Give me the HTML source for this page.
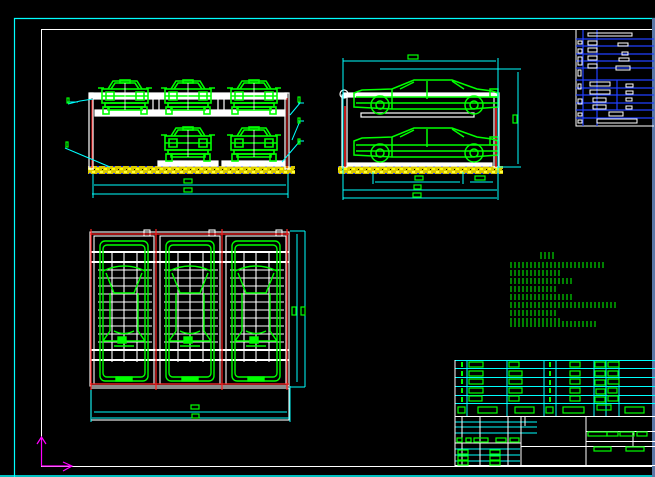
<!DOCTYPE html>
<html><head><meta charset="utf-8"><style>
html,body{margin:0;padding:0;background:#000;width:655px;height:477px;overflow:hidden}
svg{display:block}
text{font-family:"Liberation Sans",sans-serif}
</style></head><body>
<svg width="655" height="477" viewBox="0 0 655 477" xmlns="http://www.w3.org/2000/svg">
<defs>
<g id="fc" fill="none" stroke="#00ff00" stroke-width="1.6">
<path d="M8,9 L13,1 L37,1 L42,9"/><path d="M11,9 L15,3 L35,3 L39,9"/>
<rect x="20" y="0" width="10" height="3"/>
<rect x="2" y="9" width="46" height="14"/><path d="M-2,8 L4,8 M46,8 L52,8 M2,16 L48,16"/>
<path d="M6,12 L14,12 L14,20 L6,20Z M36,12 L44,12 L44,20 L36,20Z"/>
<rect x="5" y="23" width="40" height="4"/><rect x="8" y="27" width="34" height="3"/>
<rect x="3" y="27" width="6" height="7"/><rect x="41" y="27" width="6" height="7"/>
<path d="M25,3 L25,30" stroke="#fff" stroke-width="0.8"/>
</g>
<g id="sc" fill="none" stroke="#00ff00" stroke-width="1.5">
<path d="M2,14 L10,11 L40,10 L62,1 L100,1 L125,10 L140,12 L146,14 L146,28 L120,30 L40,30 L2,28 Z"/>
<path d="M48,10 L62,3 M75,2 L75,20 M100,2 L112,10 M4,18 L146,18 M4,24 L146,24 M40,10 L40,30"/>
<circle cx="28" cy="26" r="9"/><circle cx="28" cy="26" r="4"/>
<circle cx="122" cy="26" r="9"/><circle cx="122" cy="26" r="4"/>
<rect x="138" y="10" width="8" height="8"/>
</g>
<g id="pc" fill="none" stroke="#00ff00" stroke-width="1.4">
<rect x="0" y="0" width="48" height="140" rx="5"/>
<rect x="3" y="4" width="42" height="132" rx="4"/>
<path d="M3,30 Q24,20 45,30 M6,32 L14,52 L34,52 L42,32 M10,52 L10,90 M38,52 L38,90 M10,90 L3,100 M38,90 L45,100 M14,90 Q24,95 34,90 M3,100 L45,100 M14,105 L34,105"/>
<rect x="18" y="96" width="8" height="6" fill="#00ff00"/>
<rect x="16" y="136" width="16" height="4" fill="#00ff00"/>
</g>
<pattern id="fl" width="8" height="7" patternUnits="userSpaceOnUse">
<rect width="8" height="7" fill="#d8c800"/><rect x="0" y="0" width="3" height="2" fill="#ffff00"/><rect x="4" y="3" width="3" height="2" fill="#ffff40"/><rect x="1" y="5" width="2" height="1" fill="#2030ff"/><rect x="6" y="1" width="1" height="1" fill="#000"/>
</pattern>
</defs>

<path d="M14.5,477 L14.5,18.5 L655,18.5" fill="none" stroke="#00ffff" stroke-width="1.2"/>
<path d="M0,476 L655,476" stroke="#00ffff" stroke-width="1.5"/>
<rect x="41.5" y="29.5" width="620" height="437" fill="none" stroke="#fff" stroke-width="1"/>
<rect x="652" y="18" width="3" height="460" fill="#5a78a8"/>
<g stroke="#ff00ff" stroke-width="1.2" fill="none"><path d="M41.5,466 L41.5,437 M37,444 L41.5,437 L46,444 M41.5,466 L72,466 M63,462 L72,466 L63,471"/></g>

<!-- front elevation -->
<rect x="88" y="166" width="207" height="8" fill="url(#fl)"/>
<g stroke="#fff" stroke-width="1.2" fill="none">
<rect x="89" y="93" width="4" height="76"/><rect x="285" y="93" width="4" height="76"/>
<rect x="90" y="93" width="197" height="6" fill="#fff"/>
<rect x="95" y="110" width="190" height="6" fill="#fff"/>
<rect x="153" y="98" width="6" height="14"/><rect x="218" y="98" width="6" height="14"/>
<rect x="158" y="161" width="60" height="5" fill="#fff"/><rect x="222" y="161" width="63" height="5" fill="#fff"/>
</g>
<path d="M92,98 L92,168 M287,98 L287,168" stroke="#ff2020" stroke-width="1"/>
<use href="#fc" x="100" y="80"/><use href="#fc" x="163" y="80"/><use href="#fc" x="229" y="80"/>
<use href="#fc" x="163" y="127"/><use href="#fc" x="229" y="127"/>
<g stroke="#00ffff" stroke-width="1" fill="none">
<path d="M93,174 L93,198 M288,174 L288,198 M94,185 L286,185 M92,194 L288,194"/>
<path d="M68,104 L80,101 L93,99 M65,148 L110,167 M300,103 L290,115 M300,121 L292,140 M300,141 L282,162"/>
<path d="M67,102 L78,102 M298,103 L304,103 M298,121 L304,121 M298,141 L304,141"/>
</g>
<g stroke="#00ff00" stroke-width="1.2" fill="none">
<rect x="184" y="179" width="8" height="4"/><rect x="184" y="188" width="8" height="4"/>
<rect x="67" y="98" width="2" height="5"/><rect x="66" y="142" width="2" height="5"/>
<rect x="298" y="97" width="2" height="5"/><rect x="298" y="118" width="2" height="5"/><rect x="298" y="139" width="2" height="5"/>
</g>

<!-- side elevation -->
<rect x="338" y="166" width="165" height="8" fill="url(#fl)"/>
<g stroke="#fff" stroke-width="1.2" fill="none">
<rect x="342" y="95" width="5" height="72"/><rect x="494" y="93" width="5" height="74"/>
<rect x="344" y="93" width="153" height="4" fill="#fff"/><rect x="361" y="113" width="113" height="4"/>
<rect x="347" y="163" width="145" height="3" fill="#fff"/>
<circle cx="344" cy="94" r="4"/>
</g>
<path d="M345,106 L345,167 M496,107 L496,167" stroke="#ff2020" stroke-width="1.5"/>
<use href="#sc" x="352" y="79"/><use href="#sc" x="352" y="127"/>
<g stroke="#00ffff" stroke-width="1" fill="none">
<path d="M343,58 L343,200 M498,58 L498,200 M343,61 L496,61 M380,69 L521,69 M518,72 L518,164 M498,167 L521,167 M343,190 L497,190 M343,198 L497,198 M375,182 L460,182 M470,182 L493,182 M373,172 L373,184 M463,172 L463,184"/>
</g>
<g stroke="#00ff00" stroke-width="1.2" fill="none">
<rect x="408" y="55" width="10" height="4"/><rect x="513" y="115" width="4" height="8"/>
<rect x="415" y="176" width="8" height="4"/><rect x="414" y="185" width="7" height="4"/><rect x="413" y="193" width="8" height="4"/><rect x="475" y="176" width="10" height="4"/>
</g>

<!-- top-right table -->
<g stroke="#fff" stroke-width="1" fill="none"><path d="M576,30 L576,126 L654,126"/></g>
<g stroke="#2040ff" stroke-width="1.2" fill="none">
<path d="M583,30 L583,126 M597,30 L597,126 M576,39 L654,39 M576,46 L654,46 M576,54 L654,54 M576,61 L654,61 M576,68 L654,68 M576,80 L654,80 M576,88 L654,88 M576,95 L654,95 M576,103 L654,103 M576,110 L654,110 M576,118 L654,118 M617,80 L617,110"/>
</g>
<g stroke="#fff" stroke-width="1" fill="none">
<rect x="588" y="33" width="44" height="3"/><rect x="618" y="43" width="10" height="3"/><rect x="622" y="52" width="6" height="3"/><rect x="619" y="58" width="10" height="3"/><rect x="616" y="66" width="14" height="4"/>
<rect x="590" y="82" width="20" height="4"/><rect x="590" y="90" width="20" height="4"/><rect x="593" y="98" width="13" height="4"/><rect x="593" y="105" width="13" height="4"/><rect x="609" y="112" width="14" height="4"/><rect x="597" y="119" width="40" height="4"/>
<rect x="588" y="41" width="9" height="4"/><rect x="588" y="48" width="9" height="4"/><rect x="588" y="56" width="9" height="4"/><rect x="588" y="64" width="9" height="4"/>
<rect x="626" y="84" width="7" height="3"/><rect x="626" y="91" width="7" height="3"/><rect x="626" y="98" width="6" height="3"/><rect x="626" y="106" width="6" height="3"/>
<rect x="578" y="41" width="4" height="3"/><rect x="578" y="49" width="4" height="4"/><rect x="578" y="57" width="4" height="8"/><rect x="578" y="70" width="3" height="6"/><rect x="578" y="84" width="3" height="5"/><rect x="578" y="99" width="4" height="5"/><rect x="578" y="113" width="4" height="3"/><rect x="578" y="120" width="4" height="3"/>
</g>

<!-- plan view -->
<g stroke="#fff" stroke-width="1.1" fill="none">
<rect x="90" y="232" width="199" height="154"/>
<rect x="94" y="236" width="60" height="148"/><rect x="160" y="236" width="60" height="148"/><rect x="226" y="236" width="60" height="148"/>
<path d="M90,252 L289,252 M90,262 L289,262 M90,350 L289,350 M90,360 L289,360" stroke-width="2"/>
<path d="M98,270 L152,270 M98,278 L152,278 M98,286 L152,286 M98,294 L152,294 M98,302 L152,302 M98,310 L152,310 M98,318 L152,318 M98,326 L152,326 M98,334 L152,334 M98,342 L152,342"/>
<path d="M164,270 L218,270 M164,278 L218,278 M164,286 L218,286 M164,294 L218,294 M164,302 L218,302 M164,310 L218,310 M164,318 L218,318 M164,326 L218,326 M164,334 L218,334 M164,342 L218,342"/>
<path d="M230,270 L284,270 M230,278 L284,278 M230,286 L284,286 M230,294 L284,294 M230,302 L284,302 M230,310 L284,310 M230,318 L284,318 M230,326 L284,326 M230,334 L284,334 M230,342 L284,342"/>
<path d="M124,252 L124,362 M190,252 L190,362 M256,252 L256,362 M112,252 L112,362 M137,252 L137,362 M178,252 L178,362 M203,252 L203,362 M244,252 L244,362 M269,252 L269,362"/>
<rect x="144" y="230" width="6" height="6"/><rect x="209" y="230" width="6" height="6"/><rect x="276" y="230" width="6" height="6"/>
<rect x="91" y="388" width="198" height="32"/>
</g>
<g stroke="#ff2020" stroke-width="1.2"><path d="M90,234 L289,234 M90,384 L289,384 M91,229 L91,390 M156,229 L156,390 M222,229 L222,390 M287,229 L287,390"/></g>
<use href="#pc" x="100" y="241"/><use href="#pc" x="166" y="241"/><use href="#pc" x="232" y="241"/>
<g stroke="#00ffff" stroke-width="1" fill="none">
<path d="M290,231 L305,231 M290,387 L305,387 M297,234 L297,382 M305,231 L305,387 M290,386 L290,422 M91,390 L91,422 M94,412 L287,412 M92,418 L289,418"/>
</g>
<g stroke="#00ff00" stroke-width="1.2" fill="none">
<rect x="292" y="307" width="4" height="8"/><rect x="301" y="307" width="4" height="8"/>
<rect x="191" y="405" width="8" height="4"/><rect x="192" y="414" width="7" height="4"/>
</g>

<!-- notes -->
<g stroke="#00ff00" stroke-width="1" fill="none">
<path d="M541,252v7M545,252v7M549,252v7M553,252v7"/>
<path d="M511,262v6M515,262v6M519,262v6M523,262v6M527,262v6M531,262v6M535,262v6M539,262v6M543,262v6M547,262v6M551,262v6M555,262v6M559,262v6M563,262v6M567,262v6M571,262v6M575,262v6M579,262v6M583,262v6M587,262v6M591,262v6M595,262v6M599,262v6M603,262v6"/>
<path d="M511,270v6M515,270v6M519,270v6M523,270v6M527,270v6M531,270v6M535,270v6M539,270v6M543,270v6M547,270v6M551,270v6M555,270v6M559,270v6"/>
<path d="M511,278v6M515,278v6M519,278v6M523,278v6M527,278v6M531,278v6M535,278v6M539,278v6M543,278v6M547,278v6M551,278v6M555,278v6M559,278v6M563,278v6M567,278v6M571,278v6"/>
<path d="M511,286v6M515,286v6M519,286v6M523,286v6M527,286v6M531,286v6M535,286v6M539,286v6M543,286v6M547,286v6M551,286v6M555,286v6"/>
<path d="M511,294v6M515,294v6M519,294v6M523,294v6M527,294v6M531,294v6M535,294v6M539,294v6M543,294v6M547,294v6M551,294v6M555,294v6M559,294v6M563,294v6M567,294v6M571,294v6"/>
<path d="M511,302v6M515,302v6M519,302v6M523,302v6M527,302v6M531,302v6M535,302v6M539,302v6M543,302v6M547,302v6M551,302v6M555,302v6M559,302v6M563,302v6M567,302v6M571,302v6M575,302v6M579,302v6M583,302v6M587,302v6M591,302v6M595,302v6M599,302v6M603,302v6M607,302v6M611,302v6M615,302v6"/>
<path d="M511,310v6M515,310v6M519,310v6M523,310v6M527,310v6M531,310v6M535,310v6M539,310v6M543,310v6M547,310v6M551,310v6M555,310v6"/>
<path d="M511,318v6M515,318v6M519,318v6M523,318v6M527,318v6M531,318v6M535,318v6M539,318v6M543,318v6M547,318v6M551,318v6M555,318v6M559,318v6"/>
<path d="M511,321v6M515,321v6M519,321v6M523,321v6M527,321v6M531,321v6M535,321v6M539,321v6M543,321v6M547,321v6M551,321v6M555,321v6M559,321v6M563,321v6M567,321v6M571,321v6M575,321v6M579,321v6M583,321v6M587,321v6M591,321v6M595,321v6"/>
</g>

<!-- title block -->
<g stroke="#00ffff" stroke-width="1" fill="none">
<path d="M455,360.5 L655,360.5 M455,368.5 L655,368.5 M455,377.5 L655,377.5 M455,386.5 L655,386.5 M455,395.5 L655,395.5 M455,403.5 L655,403.5"/>
<path d="M467,360 L467,416 M507,360 L507,416 M544,360 L544,416 M556,360 L556,416 M594,360 L594,416 M606,360 L606,416 M619,360 L619,416"/>
<path d="M455,422 L537,422 M455,427 L537,427 M455,433 L537,433 M455,449 L520,449 M455,455 L520,455 M455,461 L520,461"/>
</g>
<g stroke="#fff" stroke-width="1" fill="none">
<path d="M455,360 L455,466 M455,416.5 L655,416.5 M521,416 L521,466 M521,446.5 L655,446.5 M586,416 L586,466 M586,431.5 L655,431.5 M586,441.5 L655,441.5 M480,416 L480,466 M508,416 L508,466 M462,416 L462,466 M525,416 L525,426 M455,443 L521,443 M455,465.5 L655,465.5 M633,431 L633,446"/>
</g>
<g stroke="#00ff00" stroke-width="1.2" fill="none">
<rect x="469" y="362" width="14" height="5"/><rect x="469" y="371" width="14" height="5"/><rect x="469" y="379" width="14" height="5"/><rect x="469" y="388" width="14" height="5"/><rect x="469" y="396" width="13" height="5"/>
<rect x="509" y="362" width="10" height="5"/><rect x="509" y="371" width="13" height="5"/><rect x="509" y="379" width="13" height="5"/><rect x="509" y="388" width="13" height="5"/><rect x="509" y="396" width="10" height="5"/>
<rect x="570" y="362" width="10" height="5"/><rect x="570" y="371" width="10" height="5"/><rect x="570" y="379" width="10" height="5"/><rect x="570" y="388" width="10" height="5"/><rect x="570" y="396" width="10" height="5"/>
<rect x="595" y="362" width="10" height="5"/><rect x="608" y="362" width="11" height="5"/><rect x="595" y="371" width="10" height="5"/><rect x="608" y="371" width="10" height="5"/><rect x="595" y="380" width="10" height="5"/><rect x="608" y="379" width="11" height="5"/><rect x="596" y="389" width="9" height="5"/><rect x="608" y="388" width="9" height="5"/><rect x="595" y="397" width="10" height="5"/><rect x="608" y="396" width="10" height="5"/>
<rect x="597" y="405" width="14" height="5"/><rect x="458" y="407" width="7" height="6"/><rect x="478" y="407" width="19" height="6"/><rect x="515" y="407" width="19" height="6"/><rect x="546" y="407" width="7" height="6"/><rect x="563" y="407" width="21" height="6"/><rect x="625" y="407" width="19" height="6"/>
<rect x="588" y="432" width="19" height="4"/><rect x="607" y="432" width="11" height="4"/><rect x="620" y="432" width="14" height="4"/><rect x="637" y="432" width="10" height="4"/>
<rect x="594" y="447" width="17" height="4"/><rect x="626" y="447" width="18" height="4"/>
<rect x="457" y="438" width="5" height="4"/><rect x="466" y="438" width="5" height="4"/><rect x="474" y="438" width="14" height="4"/><rect x="496" y="438" width="10" height="4"/><rect x="510" y="438" width="9" height="4"/>
<rect x="458" y="450" width="10" height="4"/><rect x="458" y="456" width="10" height="4"/><rect x="458" y="461" width="10" height="4"/><rect x="490" y="450" width="10" height="4"/><rect x="490" y="456" width="10" height="4"/><rect x="490" y="461" width="10" height="4"/>
</g>
<g fill="#00ff00"><rect x="461" y="362" width="2" height="5"/><rect x="461" y="371" width="2" height="5"/><rect x="461" y="379" width="2" height="5"/><rect x="461" y="388" width="2" height="5"/><rect x="461" y="397" width="2" height="5"/><rect x="549" y="362" width="2" height="5"/><rect x="549" y="371" width="2" height="5"/><rect x="549" y="380" width="2" height="5"/><rect x="549" y="388" width="2" height="5"/><rect x="549" y="397" width="2" height="5"/></g>
</svg>
</body></html>
